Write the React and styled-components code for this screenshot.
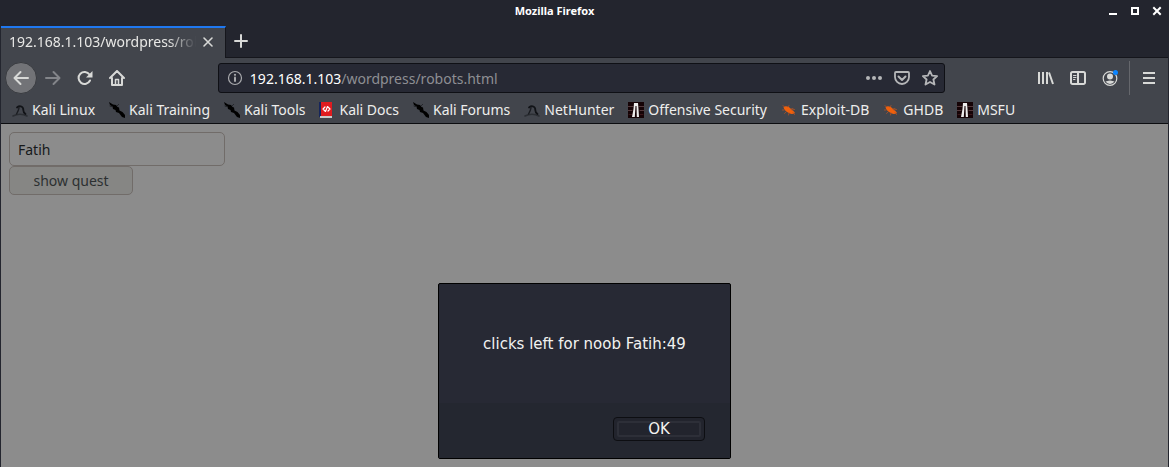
import styled, { createGlobalStyle, css } from "styled-components";

const GlobalStyle = createGlobalStyle`
  * {
    box-sizing: border-box;
  }

  body {
    margin: 0;
    font-family: "Noto Sans", sans-serif;
    font-size: 14px;
    background: #23252e;
  }

  button, input {
    font: inherit;
  }
`;

const Window = styled.div`
  display: flex;
  flex-direction: column;
  min-height: 100vh;
  border: solid #23252e;
  border-width: 0 1px;
`;

const TitleBar = styled.header`
  display: flex;
  align-items: center;
  height: 26px;
  padding: 0 3px 4px;
  color: #fff;
`;

const Title = styled.h1`
  flex: 1;
  margin: 0;
  font-size: 11px;
  line-height: 22px;
  font-weight: 700;
  text-align: center;
`;

const WindowControls = styled.div`
  display: flex;
  gap: 6px;
`;

const IconButton = styled.button`
  display: flex;
  align-items: center;
  justify-content: center;
  flex: none;
  width: ${({ $size }) => $size || 32}px;
  height: ${({ $size }) => $size || 32}px;
  padding: 0;
  border: 0;
  background: none;
  color: ${({ $color }) => $color || "#d8d9d7"};

  ${({ $round }) =>
    $round &&
    css`
      border: 1px solid #393b40;
      border-radius: 50%;
      background: #727377;
    `}
`;

const TabStrip = styled.div`
  display: flex;
  height: 32px;
  border-bottom: 1px solid #15161c;
`;

const Tab = styled.div`
  display: flex;
  align-items: center;
  width: 225px;
  height: 32px;
  padding: 0 9px 2px 8px;
  border-top: 2px solid #1f78f0;
  border-right: 1px solid #15161c;
  background: #42454c;
  color: #e8e8e6;
`;

const TabTitle = styled.span`
  flex: 1;
  margin-right: 4px;
  overflow: hidden;
  white-space: nowrap;
  line-height: 20px;
  mask-image: linear-gradient(to left, transparent, #000 28px);
`;

const NavBar = styled.nav`
  display: flex;
  align-items: center;
  height: 40px;
  padding: 0 3px 0 4px;
  background: #42454c;
`;

const NavGroup = styled.div`
  display: flex;
  align-items: center;
`;

const Spacer = styled.div`
  flex: 2;
`;

const UrlBar = styled.div`
  display: flex;
  align-items: center;
  flex: 17;
  height: 30px;
  padding-left: 4px;
  border: 1px solid #0f1015;
  border-radius: 3px;
  background: #272934;
`;

const Url = styled.a`
  flex: 1;
  margin-left: 3px;
  color: #8e8f93;
  text-decoration: none;
`;

const Host = styled.span`
  color: #fff;
`;

const Divider = styled.div`
  width: 1px;
  height: 34px;
  margin: 0 3px;
  background: #65676c;
`;

const Bookmarks = styled.ul`
  display: flex;
  gap: 14px;
  height: 26px;
  margin: 0;
  padding: 0 11px;
  list-style: none;
  background: #42454c;
  border-bottom: 1px solid #0c0d10;
`;

const Bookmark = styled.a`
  display: flex;
  align-items: center;
  gap: 4px;
  line-height: 24px;
  white-space: nowrap;
  color: #eeeeec;
  text-decoration: none;
`;

const Page = styled.main`
  position: relative;
  flex: 1;
  padding: 8px;
  background: #8c8c8c;
`;

const Form = styled.form`
  display: flex;
  flex-direction: column;
  align-items: flex-start;
`;

const NameInput = styled.input`
  width: 216px;
  height: 34px;
  padding: 0 8px;
  border: 1px solid #716c69;
  border-radius: 5px;
  background: #8c8c8c;
  color: #17191b;
`;

const QuestButton = styled.button`
  width: 124px;
  height: 29px;
  padding: 0;
  border: 1px solid #716c69;
  border-radius: 5px;
  background: #868684;
  color: #2c3031;
`;

const Overlay = styled.div`
  position: absolute;
  inset: 0;
  display: flex;
  align-items: flex-start;
  justify-content: center;
  padding-top: 159px;
`;

const Dialog = styled.div`
  width: 293px;
  border: 1px solid #000;
  border-radius: 2px;
  background: #272934;
  color: #f2f2f0;
  font-family: "DejaVu Sans", sans-serif;
  font-size: 15px;
`;

const Message = styled.p`
  margin: 0;
  padding: 50px 0 49px;
  line-height: 20px;
  text-align: center;
`;

const DialogActions = styled.div`
  display: flex;
  justify-content: flex-end;
  padding: 14px 25px 17px;
  background: #242730;
`;

const OkButton = styled.button`
  width: 92px;
  padding: 3px;
  border: 1px solid #0d0e12;
  border-radius: 4px;
  background: #22242d;
  color: inherit;
`;

const FocusRing = styled.span`
  display: block;
  border: 2px solid #2d2f38;
  border-radius: 2px;
  line-height: 12px;
`;

const Icon = ({ size = 16, children }) => (
  <svg
    width={size}
    height={size}
    viewBox="0 0 16 16"
    fill="none"
    stroke="currentColor"
    strokeWidth="2"
    strokeLinecap="round"
    strokeLinejoin="round"
    aria-hidden="true"
  >
    {children}
  </svg>
);

const Dragon = () => (
  <Icon>
    <path d="M1 14c4-2.500 10-2.500 14 0" stroke="#2b2e33" strokeWidth="1.500" />
    <path d="M5 5.500C8 3 11.500 4.500 11.300 8c0 1.800.7 3 2.200 4" stroke="#111317" strokeWidth="1.800" />
    <path d="M7 6C6.500 8.500 5.500 10 4.500 12" stroke="#1b1d22" strokeWidth="1.300" />
  </Icon>
);

const Knife = () => (
  <Icon>
    <path d="M0 0l4 2.500L7 3l1.500 2 1.500.5.500 3 3 1.500L16 13v3l-3-1-3-4-3-1-.5-2L4 7 3.500 4.500 1 3z" fill="#000" stroke="none" />
    <path d="M1 4l1.500.5M8.500 3.500l1-1" stroke="#1c1e22" strokeWidth="1" />
  </Icon>
);

const Book = () => (
  <Icon>
    <path d="M1 0h12v16H1z" fill="#e01b1f" stroke="none" />
    <path d="M0 0h2v15H0z" fill="#16265c" stroke="none" />
    <path d="M1 14h12v2H1z" fill="#c9c9c9" stroke="none" />
    <path d="M6 5L4 7l2 2M9 5l2 2-2 2M8.500 4.500l-2 5" stroke="#fff" strokeWidth="1.200" />
  </Icon>
);

const Figure = () => (
  <Icon>
    <path d="M0 0h16v16H0z" fill="#150306" stroke="none" />
    <path d="M0 4.500h5M11 4.500h5M0 8.500h4M12 8.500h4" stroke="#54393c" strokeWidth="1" />
    <path d="M1 12.500h3M12 12.500h3" stroke="#3b1519" strokeWidth="1" />
    <path d="M6 1h4l.5 6 .5 8H8.800L8.500 4h-1L6.800 15H4L5.500 7z" fill="#ededed" stroke="none" />
  </Icon>
);

const Bug = () => (
  <Icon>
    <path d="M2.500 5c2.500-1.500 5-.5 7 1.500 1.500 1.500 3 2 4.500 4.500-2.500 1.500-5 1-7-.5C4.500 9.500 3 7.500 2.500 5z" fill="#f0600c" stroke="none" />
    <path d="M3.500 5L2 3.500M7 5l1-1.500M10 7l2-.5M3 8H1.500M5 10l-1.500 1.500M8 11l-.5 2M12 10.500l1.500 2M11 8l2.500-.5" stroke="#b35325" strokeWidth=".8" />
  </Icon>
);

const bookmarks = [
  { name: "Kali Linux", Logo: Dragon },
  { name: "Kali Training", Logo: Knife },
  { name: "Kali Tools", Logo: Knife },
  { name: "Kali Docs", Logo: Book },
  { name: "Kali Forums", Logo: Knife },
  { name: "NetHunter", Logo: Dragon },
  { name: "Offensive Security", Logo: Figure },
  { name: "Exploit-DB", Logo: Bug },
  { name: "GHDB", Logo: Bug },
  { name: "MSFU", Logo: Figure },
];

const App = () => {
  return (
    <Window>
      <GlobalStyle />
      <TitleBar>
        <Title>Mozilla Firefox</Title>
        <WindowControls>
          <IconButton $size={16} $color="#fff" aria-label="Minimize">
            <Icon><path d="M4 11h8" strokeLinecap="butt" /></Icon>
          </IconButton>
          <IconButton $size={16} $color="#fff" aria-label="Maximize">
            <Icon><path d="M5 5h6v6H5z" strokeLinejoin="miter" /></Icon>
          </IconButton>
          <IconButton $size={16} $color="#fff" aria-label="Close window">
            <Icon><path d="M5 5l6 6M11 5l-6 6" strokeLinecap="square" /></Icon>
          </IconButton>
        </WindowControls>
      </TitleBar>

      <TabStrip>
        <Tab>
          <TabTitle>192.168.1.103/wordpress/robots.html</TabTitle>
          <IconButton $size={16} aria-label="Close tab">
            <Icon><path d="M4 4l8 8M12 4l-8 8" strokeWidth="1.600" /></Icon>
          </IconButton>
        </Tab>
        <IconButton $size={30} aria-label="New tab">
          <Icon><path d="M8 2v12M2 8h12" /></Icon>
        </IconButton>
      </TabStrip>

      <NavBar>
        <NavGroup>
          <IconButton $round aria-label="Back">
            <Icon><path d="M15 8H2M7.500 2L1.500 8l6 6" /></Icon>
          </IconButton>
          <IconButton $color="#83858a" aria-label="Forward">
            <Icon><path d="M1 8h13M8.500 2l6 6-6 6" /></Icon>
          </IconButton>
          <IconButton aria-label="Reload">
            <Icon>
              <path d="M13 10.500A6 6 0 1 1 12.500 4.500" />
              <path d="M15.500 1v6.500H9z" fill="currentColor" stroke="none" />
            </Icon>
          </IconButton>
          <IconButton aria-label="Home">
            <Icon>
              <path d="M1 8l7-7 7 7M3 8v7h10V8" />
              <path d="M6.500 14V9.500h3V14" strokeWidth="1.500" />
            </Icon>
          </IconButton>
        </NavGroup>
        <Spacer />
        <UrlBar>
          <IconButton $size={24} $color="#a9aaad" aria-label="Site information">
            <Icon>
              <circle cx="8" cy="8" r="6.500" strokeWidth="1.200" />
              <path d="M8 7.500V11" />
              <circle cx="8" cy="4.800" r="1.100" fill="currentColor" stroke="none" />
            </Icon>
          </IconButton>
          <Url href="#robots">
            <Host>192.168.1.103</Host>/wordpress/robots.html
          </Url>
          <IconButton $size={28} $color="#b5b6b8" aria-label="Page actions">
            <Icon>
              <g fill="currentColor" stroke="none">
                <circle cx="2" cy="8" r="2" />
                <circle cx="8" cy="8" r="2" />
                <circle cx="14" cy="8" r="2" />
              </g>
            </Icon>
          </IconButton>
          <IconButton $size={28} $color="#b5b6b8" aria-label="Save to Pocket">
            <Icon>
              <path d="M2 2h12a1 1 0 0 1 1 1v4a7 7 0 0 1-14 0V3a1 1 0 0 1 1-1z" strokeWidth="1.800" />
              <path d="M4.500 6.500L8 10l3.500-3.500" />
            </Icon>
          </IconButton>
          <IconButton $size={28} $color="#b5b6b8" aria-label="Bookmark this page">
            <Icon>
              <path d="M8 1l2.100 4.600 5 .5-3.700 3.400 1.100 5L8 12l-4.500 2.500 1.100-5L.9 6.100l5-.5z" strokeWidth="1.800" />
            </Icon>
          </IconButton>
        </UrlBar>
        <Spacer />
        <NavGroup>
          <IconButton aria-label="Library">
            <Icon>
              <path d="M1 2v12M5 2v12M9 2v12M11 2.500L15 14" strokeLinecap="butt" />
            </Icon>
          </IconButton>
          <IconButton aria-label="Sidebars">
            <Icon>
              <path d="M2.500 2h11A1.500 1.500 0 0 1 15 3.500v9a1.500 1.500 0 0 1-1.500 1.500h-11A1.500 1.500 0 0 1 1 12.500v-9A1.500 1.500 0 0 1 2.500 2zM8 2v12" />
              <path d="M3.500 5.500H6M3.500 7.500H6M3.500 9.500H5" strokeWidth="1" />
            </Icon>
          </IconButton>
          <IconButton aria-label="Account">
            <Icon>
              <circle cx="8" cy="8.500" r="6.800" strokeWidth="1.200" />
              <circle cx="8" cy="6.500" r="3" fill="currentColor" stroke="none" />
              <path d="M3.500 11.500c2 0 2-1 4.500-1s2.500 1 4.500 1a5.400 5.400 0 0 1-9 0z" fill="currentColor" stroke="none" />
              <circle cx="13.500" cy="2.500" r="2.500" fill="#0a84ff" stroke="none" />
            </Icon>
          </IconButton>
          <Divider />
          <IconButton aria-label="Open menu">
            <Icon><path d="M2 3h12M2 8h12M2 13h12" strokeLinecap="butt" /></Icon>
          </IconButton>
        </NavGroup>
      </NavBar>

      <Bookmarks>
        {bookmarks.map(({ name, Logo }) => (
          <li key={name}>
            <Bookmark href="#bookmark">
              <Logo />
              {name}
            </Bookmark>
          </li>
        ))}
      </Bookmarks>

      <Page>
        <Form onSubmit={(e) => e.preventDefault()}>
          <NameInput aria-label="Name" defaultValue="Fatih" />
          <QuestButton>show quest</QuestButton>
        </Form>
        <Overlay>
          <Dialog role="alertdialog" aria-modal="true" aria-describedby="message">
            <Message id="message">clicks left for noob Fatih:49</Message>
            <DialogActions>
              <OkButton>
                <FocusRing>OK</FocusRing>
              </OkButton>
            </DialogActions>
          </Dialog>
        </Overlay>
      </Page>
    </Window>
  );
};

export default App;
